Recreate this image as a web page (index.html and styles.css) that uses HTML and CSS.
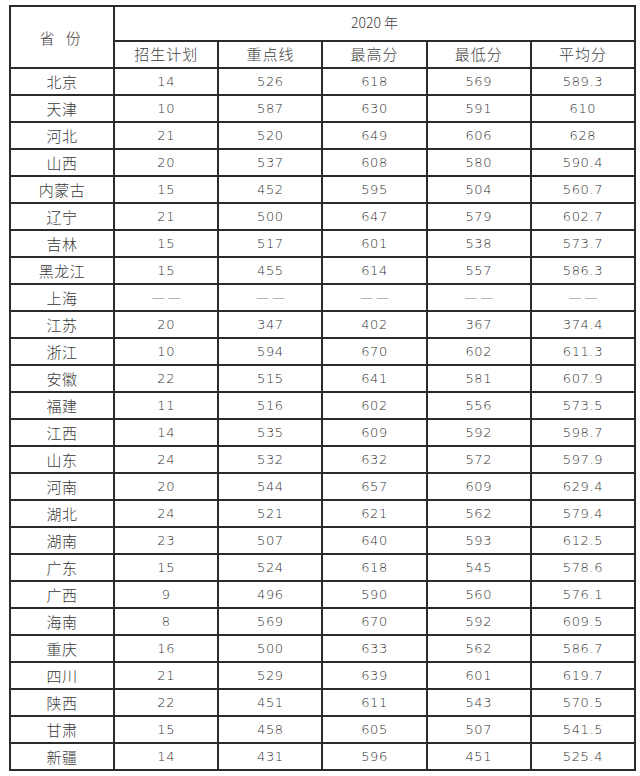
FILE: index.html
```html
<!DOCTYPE html>
<html lang="zh-CN">
<head>
<meta charset="utf-8">
<title>2020年分数线</title>
<link rel="stylesheet" href="styles.css">
</head>
<body>
<table class="score-table">
  <thead>
    <tr class="head-row1">
      <th rowspan="2" class="prov-head">省&nbsp;份</th>
      <th colspan="5" class="year-head">2020 年</th>
    </tr>
    <tr class="head-row2">
      <th>招生计划</th>
      <th>重点线</th>
      <th>最高分</th>
      <th>最低分</th>
      <th>平均分</th>
    </tr>
  </thead>
  <tbody>
    <tr><td class="prov">北京</td><td>14</td><td>526</td><td>618</td><td>569</td><td>589.3</td></tr>
    <tr><td class="prov">天津</td><td>10</td><td>587</td><td>630</td><td>591</td><td>610</td></tr>
    <tr><td class="prov">河北</td><td>21</td><td>520</td><td>649</td><td>606</td><td>628</td></tr>
    <tr><td class="prov">山西</td><td>20</td><td>537</td><td>608</td><td>580</td><td>590.4</td></tr>
    <tr><td class="prov">内蒙古</td><td>15</td><td>452</td><td>595</td><td>504</td><td>560.7</td></tr>
    <tr><td class="prov">辽宁</td><td>21</td><td>500</td><td>647</td><td>579</td><td>602.7</td></tr>
    <tr><td class="prov">吉林</td><td>15</td><td>517</td><td>601</td><td>538</td><td>573.7</td></tr>
    <tr><td class="prov">黑龙江</td><td>15</td><td>455</td><td>614</td><td>557</td><td>586.3</td></tr>
    <tr><td class="prov">上海</td><td class="dash">——</td><td class="dash">——</td><td class="dash">——</td><td class="dash">——</td><td class="dash">——</td></tr>
    <tr><td class="prov">江苏</td><td>20</td><td>347</td><td>402</td><td>367</td><td>374.4</td></tr>
    <tr><td class="prov">浙江</td><td>10</td><td>594</td><td>670</td><td>602</td><td>611.3</td></tr>
    <tr><td class="prov">安徽</td><td>22</td><td>515</td><td>641</td><td>581</td><td>607.9</td></tr>
    <tr><td class="prov">福建</td><td>11</td><td>516</td><td>602</td><td>556</td><td>573.5</td></tr>
    <tr><td class="prov">江西</td><td>14</td><td>535</td><td>609</td><td>592</td><td>598.7</td></tr>
    <tr><td class="prov">山东</td><td>24</td><td>532</td><td>632</td><td>572</td><td>597.9</td></tr>
    <tr><td class="prov">河南</td><td>20</td><td>544</td><td>657</td><td>609</td><td>629.4</td></tr>
    <tr><td class="prov">湖北</td><td>24</td><td>521</td><td>621</td><td>562</td><td>579.4</td></tr>
    <tr><td class="prov">湖南</td><td>23</td><td>507</td><td>640</td><td>593</td><td>612.5</td></tr>
    <tr><td class="prov">广东</td><td>15</td><td>524</td><td>618</td><td>545</td><td>578.6</td></tr>
    <tr><td class="prov">广西</td><td>9</td><td>496</td><td>590</td><td>560</td><td>576.1</td></tr>
    <tr><td class="prov">海南</td><td>8</td><td>569</td><td>670</td><td>592</td><td>609.5</td></tr>
    <tr><td class="prov">重庆</td><td>16</td><td>500</td><td>633</td><td>562</td><td>586.7</td></tr>
    <tr><td class="prov">四川</td><td>21</td><td>529</td><td>639</td><td>601</td><td>619.7</td></tr>
    <tr><td class="prov">陕西</td><td>22</td><td>451</td><td>611</td><td>543</td><td>570.5</td></tr>
    <tr><td class="prov">甘肃</td><td>15</td><td>458</td><td>605</td><td>507</td><td>541.5</td></tr>
    <tr><td class="prov">新疆</td><td>14</td><td>431</td><td>596</td><td>451</td><td>525.4</td></tr>
  </tbody>
</table>
</body>
</html>
```
FILE: styles.css
```css
html, body {
  margin: 0;
  padding: 0;
  background: #ffffff;
}

body {
  padding: 5px 0 0 9px;
  font-family: "DejaVu Sans", "Noto Sans CJK SC", sans-serif;
  color: #3c3c3c;
}

.score-table {
  border-collapse: collapse;
  width: 627px;
  table-layout: fixed;
  border: 2px solid #222222;
}

.score-table th,
.score-table td {
  border: 2px solid #2a2a2a;
  padding: 0;
  text-align: center;
  vertical-align: middle;
  font-weight: 300;
}

.score-table th {
  font-family: "Noto Sans CJK SC", sans-serif;
  font-size: 15px;
  letter-spacing: 1px;
  color: #404040;
}

.head-row1 th {
  height: 30px;
  padding-bottom: 3px;
}

.head-row1 th.prov-head {
  padding-bottom: 0;
}

.head-row2 th {
  height: 23px;
  padding-bottom: 2px;
}

.year-head {
  font-size: 14px !important;
  letter-spacing: 0 !important;
}

.prov-head {
  letter-spacing: 4px !important;
}

.score-table td {
  height: 25px;
  font-size: 13px;
  font-weight: 200;
  letter-spacing: 0.6px;
  color: #333333;
}

.score-table td.prov {
  font-family: "Noto Sans CJK SC", sans-serif;
  font-size: 15px;
  font-weight: 300;
  letter-spacing: 0.5px;
  color: #383838;
}

.score-table td.dash {
  color: #7a7a7a;
  font-size: 13px;
  letter-spacing: 3px;
  padding-left: 3px;
}
```
